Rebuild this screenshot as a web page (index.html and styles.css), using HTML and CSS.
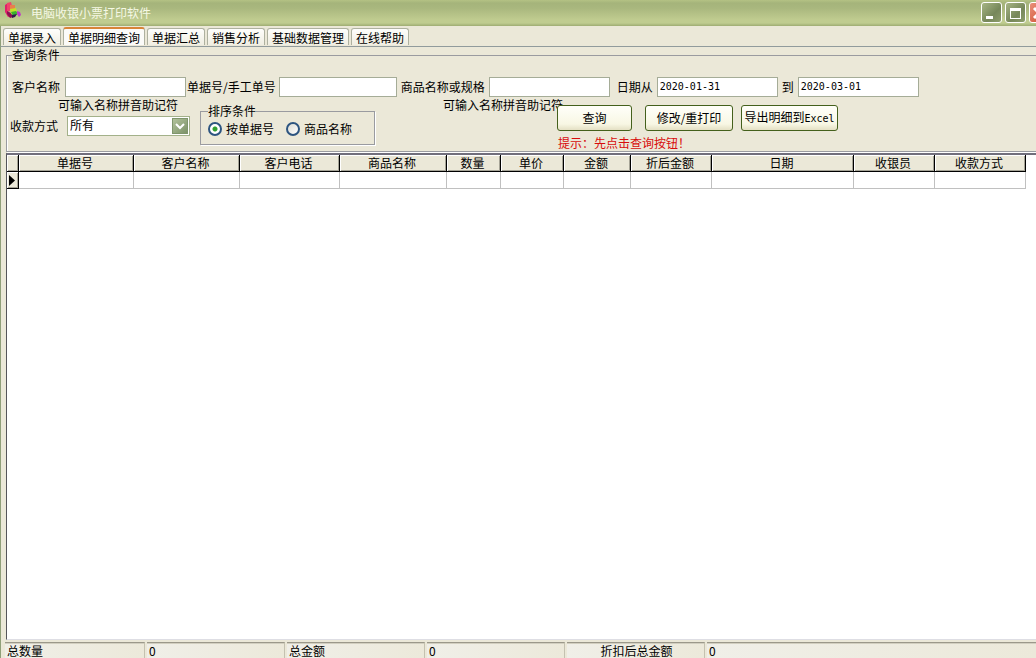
FILE: index.html
```html
<!DOCTYPE html>
<html lang="zh-CN">
<head>
    <meta charset="UTF-8">
    <meta name="viewport" content="width=device-width, initial-scale=1.0">
    <title>电脑收银小票打印软件</title>
    <link rel="stylesheet" href="styles.css">
</head>
<body>

    <div class="window">
        <!-- 标题栏 -->
        <header class="titlebar">
            <svg class="logo" viewBox="0 0 18 17" aria-hidden="true">
                <path d="M1 3l3-2v9l3 4-3 1-3-5z" fill="#e0206c"/>
                <path d="M3 1l4-1 1 4-2 5-3 1z" fill="#f04468"/>
                <path d="M3 9l4 2 2 4-3 1-3-4z" fill="#8c1050"/>
                <path d="M6 3l5 0 0 4-5 1z" fill="#e8804c"/>
                <path d="M6 7l6-1 1 5-6 1z" fill="#c4e028"/>
                <path d="M7 10l5-1 2 3-5 2z" fill="#38b030"/>
                <path d="M8 13l5-1-2 3-3 1z" fill="#30184c"/>
                <path d="M13 9l3 1 1 3-2 2-2-3z" fill="#c038c8"/>
            </svg>
            <h1>电脑收银小票打印软件</h1>
            <div class="window-buttons">
                <button type="button" aria-label="最小化">
                    <svg viewBox="0 0 18 18"><path d="M4 12h7v3H4z" fill="#fff"/></svg>
                </button>
                <button type="button" aria-label="最大化">
                    <svg viewBox="0 0 18 18"><path d="M4 4h11v11H4zM5 7v7h9V7z" fill="#fff" fill-rule="evenodd"/></svg>
                </button>
                <button type="button" class="close" aria-label="关闭">
                    <svg viewBox="0 0 18 18"><path d="M4 4l10 10M14 4L4 14" stroke="#fff" stroke-width="3"/></svg>
                </button>
            </div>
        </header>

        <!-- 选项卡 -->
        <nav class="tabs">
            <button type="button">单据录入</button>
            <button type="button" class="active">单据明细查询</button>
            <button type="button">单据汇总</button>
            <button type="button">销售分析</button>
            <button type="button">基础数据管理</button>
            <button type="button">在线帮助</button>
        </nav>

        <main class="page">
            <!-- 查询条件 -->
            <fieldset class="query">
                <legend>查询条件</legend>

                <div class="fields">
                    <label for="customer">客户名称</label>
                    <input type="text" id="customer">
                    <label for="billNo">单据号/手工单号</label>
                    <input type="text" id="billNo" class="short">
                    <label for="product">商品名称或规格</label>
                    <input type="text" id="product">
                    <label for="dateFrom" class="date-label">日期从</label>
                    <input type="text" id="dateFrom" value="2020-01-31">
                    <label for="dateTo">到</label>
                    <input type="text" id="dateTo" value="2020-03-01">
                </div>

                <div class="options">
                    <div class="payment">
                        <p class="hint">可输入名称拼音助记符</p>
                        <div class="payment-row">
                            <label for="payType">收款方式</label>
                            <div class="select-box">
                                <select id="payType">
                                    <option>所有</option>
                                </select>
                                <svg class="arrow" viewBox="0 0 14 14" aria-hidden="true"><path d="M3 5l4 4 4-4" fill="none" stroke="#fff" stroke-width="2"/></svg>
                            </div>
                        </div>
                    </div>

                    <fieldset class="sort">
                        <legend>排序条件</legend>
                        <label><input type="radio" name="sort" checked>按单据号</label>
                        <label><input type="radio" name="sort">商品名称</label>
                    </fieldset>

                    <p class="hint product-hint">可输入名称拼音助记符</p>

                    <div class="actions">
                        <div class="action-buttons">
                            <button type="button" class="search">查询</button>
                            <button type="button" class="reprint">修改/重打印</button>
                            <button type="button" class="export">导出明细到<span>Excel</span></button>
                        </div>
                        <p class="tip">提示：先点击查询按钮！</p>
                    </div>
                </div>
            </fieldset>

            <!-- 明细表格 -->
            <div class="grid">
                <table>
                    <colgroup>
                        <col class="c-mark"><col class="c-bill"><col class="c-name"><col class="c-phone">
                        <col class="c-product"><col class="c-count"><col class="c-price"><col class="c-sum">
                        <col class="c-discount"><col class="c-date"><col class="c-cashier"><col class="c-pay">
                    </colgroup>
                    <thead>
                        <tr>
                            <th></th>
                            <th>单据号</th>
                            <th>客户名称</th>
                            <th>客户电话</th>
                            <th>商品名称</th>
                            <th>数量</th>
                            <th>单价</th>
                            <th>金额</th>
                            <th>折后金额</th>
                            <th>日期</th>
                            <th>收银员</th>
                            <th>收款方式</th>
                        </tr>
                    </thead>
                    <tbody>
                        <tr>
                            <th><svg class="marker" viewBox="0 0 6 11" aria-hidden="true"><path d="M0 0l6 5.500-6 5.500z"/></svg></th>
                            <td></td><td></td><td></td><td></td><td></td><td></td>
                            <td></td><td></td><td></td><td></td><td></td>
                        </tr>
                    </tbody>
                </table>
            </div>
        </main>

        <!-- 状态栏 -->
        <footer class="status">
            <span class="first">总数量</span>
            <span>0</span>
            <span>总金额</span>
            <span>0</span>
            <span class="center">折扣后总金额</span>
            <span class="rest">0</span>
        </footer>
    </div>

</body>
</html>
```
FILE: styles.css
```css
* {
    margin: 0;
    padding: 0;
    box-sizing: border-box;
}

body {
    font-family: "Noto Sans CJK SC", sans-serif;
    font-size: 12px;
    line-height: 14px;
    color: #000;
    background-color: #ebe8d8;
}

button,
input,
select {
    font: inherit;
    color: inherit;
}

.window {
    display: flex;
    flex-direction: column;
    height: 100vh;
    overflow: hidden;
}

/* 标题栏 */
.titlebar {
    display: flex;
    align-items: center;
    height: 26px;
    padding-left: 4px;
    background: linear-gradient(#b4c284 0, #a5b47b 3px, #a9b77e 8px, #c0cc90 20px, #bfcc90 23px, #9eac72 26px);
}

.logo {
    width: 18px;
    height: 17px;
    margin-bottom: 6px;
}

.titlebar h1 {
    flex: 1;
    margin-left: 9px;
    font-size: 12px;
    font-weight: normal;
    color: #f5f8e4;
}

.window-buttons {
    display: flex;
    gap: 3px;
    margin: 0 -14px 1px 0;
}

.window-buttons button {
    width: 21px;
    height: 21px;
    border: 1px solid #fff;
    border-radius: 3px;
    background: linear-gradient(135deg, #a7b585, #76875a 60%, #8e9d6b);
}

.window-buttons button.close {
    background: linear-gradient(135deg, #e8907a, #cf4a2c);
}

.window-buttons svg {
    display: block;
    width: 18px;
    height: 18px;
}

/* 选项卡 */
.tabs {
    display: flex;
    align-items: flex-end;
    gap: 2px;
    height: 21px;
    padding-left: 2px;
    border-left: 1px solid #8f9f78;
    border-bottom: 1px solid #919b9c;
}

.tabs button {
    height: 17px;
    padding: 0 4px;
    margin-bottom: 1px;
    white-space: nowrap;
    line-height: 15px;
    border: 1px solid #aeb1a0;
    border-bottom: none;
    border-radius: 3px 3px 0 0;
    background: linear-gradient(#fefefc, #f0eee2);
}

.tabs button.active {
    height: 18px;
    border-top: 2px solid #d88438;
    background: #fbfbf9;
}

.page {
    display: flex;
    flex: 1;
    flex-direction: column;
    min-height: 0;
    padding: 1px 0 0 5px;
    border-left: 1px solid #8f9f78;
}

/* 查询条件 */
.query {
    margin-right: -8px;
    padding: 15px 0 1px 3px;
    border: 1px solid #9a9ba0;
    box-shadow: 1px 1px 0 #fff, inset 1px 0 0 #fff;
}

.query > legend {
    margin-left: 2px;
    background-color: #ebe8d8;
}

.fields {
    display: flex;
    align-items: center;
    padding-left: 2px;
    white-space: nowrap;
}

.fields input {
    width: 121px;
    height: 20px;
    margin: 0 1px 0 4px;
    padding: 0 2px 2px;
    border: 1px solid #a5ac97;
    background-color: #fff;
    font-family: "DejaVu Sans Mono", monospace;
    font-size: 10px;
}

#customer {
    margin-left: 5px;
}

.fields input.short {
    width: 118px;
    margin: 0 4px 0 3px;
}

.fields .date-label {
    margin-left: 6px;
}

#dateFrom {
    margin-right: 4px;
}

.options {
    display: flex;
    align-items: flex-start;
    padding-top: 1px;
}

.hint {
    white-space: nowrap;
}

.payment {
    width: 190px;
}

.payment .hint {
    margin-left: 48px;
}

.payment-row {
    display: flex;
    align-items: center;
    gap: 9px;
    margin-top: 4px;
}

.select-box {
    position: relative;
}

.select-box select {
    display: block;
    width: 123px;
    height: 20px;
    padding: 0 2px 2px;
    border: 1px solid #a3b18a;
    background-color: #fff;
    appearance: none;
}

.arrow {
    position: absolute;
    top: 2px;
    right: 2px;
    width: 16px;
    height: 16px;
    border: 1px solid #7f956c;
    background: linear-gradient(135deg, #b2c29c, #7d9369);
    pointer-events: none;
}

.sort {
    display: flex;
    gap: 12px;
    width: 175px;
    height: 41px;
    margin-top: 6px;
    padding: 4px 0 0 7px;
    border: 1px solid #9a9ba0;
    box-shadow: 1px 1px 0 #fff;
}

.sort label {
    display: flex;
    align-items: center;
    gap: 4px;
    height: 14px;
    white-space: nowrap;
}

.sort input {
    width: 14px;
    height: 14px;
    border: 2px solid #2d5580;
    border-radius: 50%;
    background: linear-gradient(135deg, #dcdcd4, #fff);
    appearance: none;
}

.sort input:checked {
    background: radial-gradient(circle, #30a030 2px, #fff 3px);
}

.product-hint {
    width: 114px;
    margin-left: 68px;
}

.actions {
    padding-top: 7px;
}

.action-buttons {
    display: flex;
}

.action-buttons button {
    height: 26px;
    white-space: nowrap;
    border: 1px solid #44601c;
    border-radius: 3px;
    background: linear-gradient(#fffffa, #f8f7e4 75%, #e4e0c4);
}

.action-buttons .search {
    width: 75px;
    margin-right: 13px;
}

.action-buttons .reprint {
    width: 88px;
    margin-right: 8px;
}

.action-buttons .export {
    width: 97px;
}

.export span {
    font-family: "DejaVu Sans Mono", monospace;
    font-size: 10px;
}

.tip {
    margin: 5px 0 0 1px;
    color: #d80c0c;
}

/* 明细表格 */
.grid {
    flex: 1;
    min-height: 0;
    margin-top: 1px;
    border-top: 2px solid #716f7c;
    border-left: 1px solid #55555a;
    border-bottom: 1px solid #dedee4;
    background-color: #fff;
}

.grid table {
    width: 1019px;
    table-layout: fixed;
    border-collapse: separate;
    border-spacing: 0;
}

.c-mark { width: 12px; }
.c-bill { width: 115px; }
.c-name { width: 106px; }
.c-phone { width: 100px; }
.c-product { width: 107px; }
.c-count { width: 54px; }
.c-price { width: 63px; }
.c-sum { width: 67px; }
.c-discount { width: 81px; }
.c-date { width: 142px; }
.c-cashier { width: 81px; }
.c-pay { width: 91px; }

.grid th {
    height: 17px;
    padding-right: 2px;
    font-weight: normal;
    border-right: 1px solid #000;
    border-bottom: 1px solid #000;
    background-color: #ebe8d8;
    box-shadow: inset 1px 1px 0 #fff, inset -1px -1px 0 #a5a396;
}

.grid td {
    height: 17px;
    border-right: 1px solid #c0c0c0;
    border-bottom: 1px solid #c0c0c0;
}

.marker {
    display: block;
    width: 6px;
    height: 11px;
    margin: 0 auto;
}

/* 状态栏 */
.status {
    display: flex;
    gap: 2px;
    padding: 2px 0 0 4px;
    border-left: 1px solid #8f9f78;
}

.status span {
    width: 138px;
    height: 16px;
    padding-left: 2px;
    border-top: 1px solid #9b988a;
    border-right: 1px solid #c4c1b0;
    background: linear-gradient(90deg, #f0efe8, #ece9da);
    box-shadow: inset 0 1px 0 #d2cfc0;
    line-height: 15px;
}

.status .first {
    width: 140px;
}

.status .center {
    text-align: center;
}

.status .rest {
    flex: 1;
    border-right: none;
}
```
